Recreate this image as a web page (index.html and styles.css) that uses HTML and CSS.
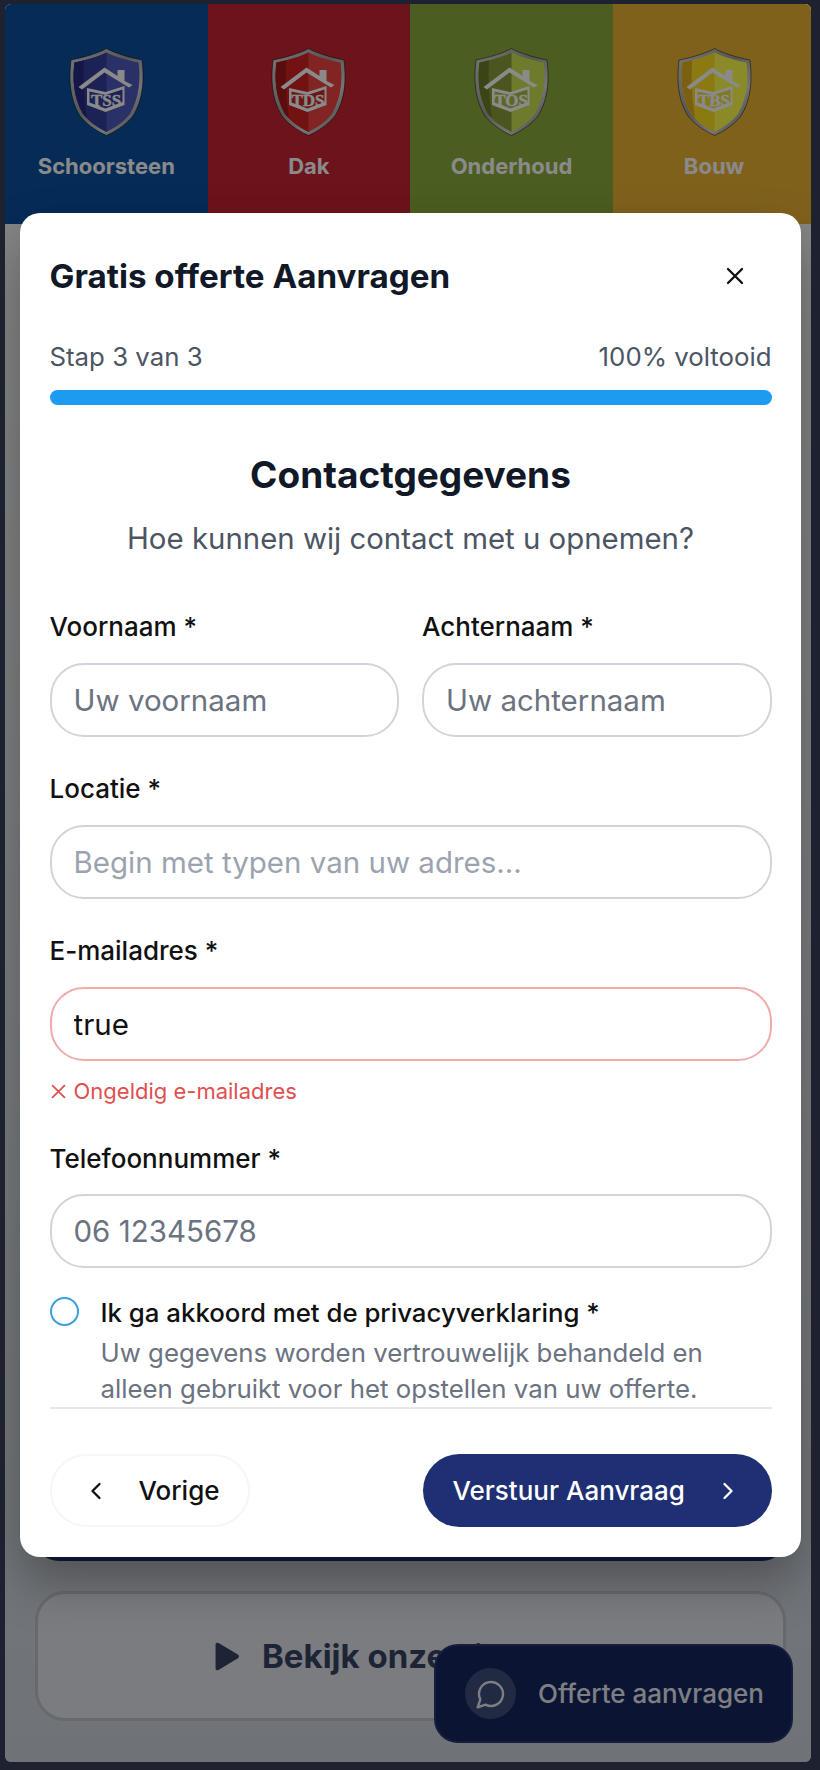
FILE: index.html
```html
<!DOCTYPE html>
<html lang="nl">
<head>
<meta charset="utf-8">
<title>Gratis offerte Aanvragen</title>
<link rel="stylesheet" href="styles.css">
</head>
<body>
<div class="frame">
  <svg class="defs" width="0" height="0" aria-hidden="true">
    <defs>
      <linearGradient id="metal" x1="0" y1="0" x2="1" y2="1">
        <stop offset="0" stop-color="#dcdcdc"/>
        <stop offset=".45" stop-color="#a0a0a0"/>
        <stop offset=".7" stop-color="#d8d8d8"/>
        <stop offset="1" stop-color="#666"/>
      </linearGradient>
      <path id="outer" d="M37.500 0.500C30 5 13 10 2 12C0 30 0 50 11 68C19 78 30 84 37.500 87.500C45 84 56 78 64 68C75 50 75 30 73 12C62 10 45 5 37.500 0.500Z"/>
      <path id="inner" d="M37.500 4.500C30 8.500 15.500 12.500 5.500 14.500C3.500 30 4 48 14 66C21.500 75.500 31 80.500 37.500 84C44 80.500 53.500 75.500 61 66C71 48 71.500 30 69.500 14.500C59.500 12.500 45 8.500 37.500 4.500Z"/>
      <path id="left" d="M37.500 4.500C30 8.500 15.500 12.500 5.500 14.500C3.500 30 4 48 14 66C21.500 75.500 31 80.500 37.500 84Z"/>
      <path id="strip" d="M15 12.300C11.500 13.200 8.500 14 5.500 14.500C3.500 30 4 48 14 66C15 67.300 16.200 68.600 18 70C15 50 14 30 15 12.300Z"/>
      <g id="house">
        <path d="M9.500 39L35.500 19.500L48.500 28V22H55.500V33L63.500 37L60 39.500L35.500 24.500L13 41.500Z" fill="#fff"/>
        <path d="M18 40L36.500 44L55.500 38V57L36.500 64L18 57Z" fill="#fff"/>
      </g>
    </defs>
  </svg>

  <header class="banner">
    <div class="tile tile-blue">
      <svg class="shield" viewBox="0 0 75 88">
        <use href="#outer" class="shield-rim"/>
        <use href="#inner" class="fill-blue"/>
        <use href="#left" class="fill-blue-dark"/>
        <use href="#strip" class="fill-blue-deep"/>
        <use href="#house"/>
        <path class="panel-blue" d="M20.500 43.500L36.500 47L53.500 41.500V54L36.500 60.500L20.500 54.500Z"/>
        <text class="crest" x="37" y="57.500">TSS</text>
      </svg>
      <span class="tile-label">Schoorsteen</span>
    </div>
    <div class="tile tile-red">
      <svg class="shield" viewBox="0 0 75 88">
        <use href="#outer" class="shield-rim"/>
        <use href="#inner" class="fill-red"/>
        <use href="#left" class="fill-red-dark"/>
        <use href="#strip" class="fill-red-deep"/>
        <use href="#house"/>
        <path class="panel-red" d="M20.500 43.500L36.500 47L53.500 41.500V54L36.500 60.500L20.500 54.500Z"/>
        <text class="crest" x="37" y="57.500">TDS</text>
      </svg>
      <span class="tile-label">Dak</span>
    </div>
    <div class="tile tile-green">
      <svg class="shield" viewBox="0 0 75 88">
        <use href="#outer" class="shield-rim"/>
        <use href="#inner" class="fill-green"/>
        <use href="#left" class="fill-green-dark"/>
        <use href="#strip" class="fill-green-deep"/>
        <use href="#house"/>
        <path class="panel-green" d="M20.500 43.500L36.500 47L53.500 41.500V54L36.500 60.500L20.500 54.500Z"/>
        <text class="crest" x="37" y="57.500">TOS</text>
      </svg>
      <span class="tile-label">Onderhoud</span>
    </div>
    <div class="tile tile-yellow">
      <svg class="shield" viewBox="0 0 75 88">
        <use href="#outer" class="shield-rim"/>
        <use href="#inner" class="fill-yellow"/>
        <use href="#left" class="fill-yellow-dark"/>
        <use href="#strip" class="fill-yellow-deep"/>
        <use href="#house"/>
        <path class="panel-yellow" d="M20.500 43.500L36.500 47L53.500 41.500V54L36.500 60.500L20.500 54.500Z"/>
        <text class="crest" x="37" y="57.500">TBS</text>
      </svg>
      <span class="tile-label">Bouw</span>
    </div>
  </header>

  <main class="content">
    <a class="cta-solid" href="#">Offerte aanvragen</a>
    <a class="cta-outline" href="#">
      <svg class="play" viewBox="2.500 0 23.500 28" preserveAspectRatio="none"><path d="M3 2.500C3 1 4.600 0.300 5.800 1L24 12C25.300 12.800 25.300 15 24 15.800L5.800 27C4.600 27.700 3 27 3 25.500Z"/></svg>
      <span>Bekijk onze video</span>
    </a>
  </main>

  <button class="fab" type="button">
    <span class="fab-icon">
      <svg viewBox="0 0 24 24"><path d="M7.900 20A9 9 0 1 0 4 16.100L2 22Z"/></svg>
    </span>
    <span>Offerte aanvragen</span>
  </button>

  <div class="overlay">
    <section class="modal">
      <div class="modal-head">
        <h2 class="modal-title">Gratis offerte Aanvragen</h2>
        <button class="close" type="button" aria-label="Sluiten">
          <svg viewBox="0 0 24 24"><path d="M18 6L6 18M6 6l12 12"/></svg>
        </button>
      </div>
      <div class="progress-text"><span>Stap 3 van 3</span><span>100% voltooid</span></div>
      <div class="progress-bar"></div>

      <h3 class="step-title">Contactgegevens</h3>
      <p class="step-sub">Hoe kunnen wij contact met u opnemen?</p>

      <form class="form">
        <div class="name-row">
          <label class="field">
            <span class="field-label">Voornaam *</span>
            <input class="input" type="text" placeholder="Uw voornaam">
          </label>
          <label class="field">
            <span class="field-label">Achternaam *</span>
            <input class="input" type="text" placeholder="Uw achternaam">
          </label>
        </div>
        <label class="field">
          <span class="field-label">Locatie *</span>
          <input class="input input-light" type="text" placeholder="Begin met typen van uw adres...">
        </label>
        <div class="field">
          <label class="field-label" for="mail">E-mailadres *</label>
          <input class="input input-error" id="mail" type="text" value="true">
          <p class="error">
            <svg viewBox="0 0 14 14"><path d="M1 1l12 12M13 1L1 13"/></svg>
            <span>Ongeldig e-mailadres</span>
          </p>
        </div>
        <label class="field">
          <span class="field-label">Telefoonnummer *</span>
          <input class="input" type="text" placeholder="06 12345678">
        </label>
        <div class="consent">
          <span class="radio"></span>
          <div class="consent-text">
            <p class="consent-title">Ik ga akkoord met de privacyverklaring *</p>
            <p class="consent-note">Uw gegevens worden vertrouwelijk behandeld en alleen gebruikt voor het opstellen van uw offerte.</p>
          </div>
        </div>
      </form>

      <div class="modal-foot">
        <button class="btn btn-back" type="button">
          <svg viewBox="0 0 24 24"><path d="M15 18l-6-6 6-6"/></svg>
          <span>Vorige</span>
        </button>
        <button class="btn btn-send" type="button">
          <span>Verstuur Aanvraag</span>
          <svg viewBox="0 0 24 24"><path d="M9 18l6-6-6-6"/></svg>
        </button>
      </div>
    </section>
  </div>
</div>
</body>
</html>
```

FILE: styles.css
```css
* { box-sizing: border-box; }
html, body { margin: 0; padding: 0; }
body {
  width: 820px;
  height: 1770px;
  padding: 4px 0 0 5px;
  background: #1d2130;
  font-family: Inter, "Liberation Sans", sans-serif;
  overflow: hidden;
}
p, h2, h3 { margin: 0; }
.defs { position: absolute; }

.frame {
  position: relative;
  width: 806px;
  height: 1758px;
  border-radius: 6px;
  overflow: hidden;
  background: linear-gradient(180deg, #f6f6f6 12%, #cdd5de 100%);
}

/* banner */
.banner { display: flex; height: 220px; }
.tile {
  flex: 0 0 202.600px;
  display: flex;
  flex-direction: column;
  align-items: center;
  padding-top: 44px;
}
.tile-blue { background: #0b51a1; }
.tile-red { background: #c82333; }
.tile-green { background: #8bac3b; }
.tile-yellow { background: #edb434; }
.shield { width: 75px; height: 88px; display: block; }
.shield-rim { fill: url(#metal); stroke: rgba(0, 0, 0, .6); stroke-width: .8; }
.fill-blue { fill: #4c5bbe; }
.fill-blue-dark { fill: #3640a0; }
.fill-blue-deep { fill: #252c85; }
.panel-blue { fill: #3640a0; }
.fill-red { fill: #f04444; }
.fill-red-dark { fill: #d42222; }
.fill-red-deep { fill: #a71818; }
.panel-red { fill: #c82a2a; }
.fill-green { fill: #cde452; }
.fill-green-dark { fill: #899d3b; }
.fill-green-deep { fill: #6c7e2c; }
.panel-green { fill: #a9bf48; }
.fill-yellow { fill: #ffff4a; }
.fill-yellow-dark { fill: #ffe221; }
.fill-yellow-deep { fill: #e2b21e; }
.panel-yellow { fill: #f0e038; }
.crest {
  font-family: "Liberation Serif", serif;
  font-weight: 700;
  font-size: 17px;
  text-anchor: middle;
  fill: #fff;
  stroke: #fff;
  stroke-width: .4;
}
.tile-label {
  margin-top: 16px;
  font-size: 22px;
  line-height: 28px;
  font-weight: 700;
  color: #fff;
}

/* page behind the dialog */
.content { padding: 1217px 25px 0 30px; }
.cta-solid {
  display: block;
  height: 120px;
  border-radius: 24px;
  background: #1c3076;
  color: #fff;
  text-decoration: none;
}
.cta-outline {
  margin-top: 30px;
  height: 130px;
  border: 3px solid #bdc4ce;
  border-radius: 30px;
  background: #e2e6eb;
  display: flex;
  align-items: center;
  justify-content: flex-start;
  gap: 22px;
  padding-left: 177px;
  color: #364364;
  font-size: 33px;
  font-weight: 700;
  text-decoration: none;
}
.play { width: 25px; height: 29px; fill: #364364; }

.fab {
  position: absolute;
  left: 429px;
  top: 1640px;
  width: 359px;
  height: 99px;
  border: 2px solid #2a3870;
  border-radius: 24px;
  background: #16265f;
  color: #e8eaf0;
  display: flex;
  align-items: center;
  gap: 22px;
  padding: 0 0 0 29px;
  font: 500 26px Inter, "Liberation Sans", sans-serif;
}
.fab-icon {
  width: 51px;
  height: 51px;
  border-radius: 50%;
  background: rgba(255, 255, 255, .18);
  display: flex;
  align-items: center;
  justify-content: center;
}
.fab-icon svg { width: 32px; height: 32px; fill: none; stroke: #e8eaf0; stroke-width: 1.800; stroke-linejoin: round; stroke-linecap: round; }

.overlay {
  position: absolute;
  inset: 0;
  background: rgba(0, 0, 0, .46);
}

/* dialog */
.modal {
  position: absolute;
  left: 15px;
  top: 209px;
  width: 781px;
  height: 1344px;
  padding: 43px 29.500px 30px;
  background: #fff;
  border-radius: 20px;
  box-shadow: 0 25px 50px rgba(0, 0, 0, .3);
  color: #111827;
}
.modal-head { display: flex; justify-content: space-between; align-items: center; height: 40px; }
.modal-title { font-size: 33.200px; line-height: 40px; font-weight: 700; color: #111827; }
.close {
  width: 44px;
  height: 44px;
  margin-right: 15px;
  padding: 0;
  border: 0;
  background: none;
  display: flex;
  align-items: center;
  justify-content: center;
}
.close svg { width: 28px; height: 28px; fill: none; stroke: #111; stroke-width: 2; stroke-linecap: round; }
.progress-text {
  margin-top: 46px;
  display: flex;
  justify-content: space-between;
  font-size: 25.800px;
  line-height: 30px;
  color: #4b5563;
}
.progress-bar {
  margin-top: 18px;
  height: 15px;
  border-radius: 8px;
  background: #1d9bf0;
}
.step-title {
  margin-top: 48px;
  text-align: center;
  font-size: 37px;
  line-height: 44px;
  font-weight: 700;
  color: #111827;
}
.step-sub {
  margin-top: 24px;
  text-align: center;
  font-size: 29.400px;
  line-height: 36px;
  color: #4b5563;
}

.form {
  margin-top: 55px;
  height: 795px;
  display: flex;
  flex-direction: column;
  gap: 37.500px;
  overflow: hidden;
}
.name-row { display: grid; grid-template-columns: 1fr 1fr; gap: 23px; }
.field { display: block; }
.field-label {
  display: block;
  margin-bottom: 20.500px;
  font-size: 26px;
  line-height: 30px;
  font-weight: 450;
  color: #111;
}
.input {
  display: block;
  width: 100%;
  height: 74px;
  padding: 0 22px;
  border: 2px solid #d1d5db;
  border-radius: 34px;
  background: #fff;
  outline: none;
  font: 400 29.500px Inter, "Liberation Sans", sans-serif;
  color: #111;
}
.input::placeholder { color: #6b7280; opacity: 1; }
.input-light::placeholder { color: #9ca3af; }
.input-error { border-color: #f1aaaa; }
.error {
  margin-top: 15.500px;
  display: flex;
  align-items: center;
  gap: 8px;
  font-size: 22px;
  line-height: 30px;
  color: #e04f4f;
}
.error svg { width: 15px; height: 15px; fill: none; stroke: #e04f4f; stroke-width: 1.600; margin-left: 1px; }
.consent { display: flex; gap: 22px; margin-top: -10.500px; }
.radio {
  flex: none;
  width: 29px;
  height: 29px;
  margin-top: 2px;
  border: 2px solid #3b9fe0;
  border-radius: 50%;
}
.consent-text { padding-right: 20px; }
.consent-title { font-size: 25.800px; line-height: 36px; font-weight: 450; color: #111; }
.consent-note { margin-top: 4px; font-size: 25.800px; line-height: 36px; color: #6b7280; }

.modal-foot {
  border-top: 2px solid #e5e7eb;
  padding-top: 45px;
  display: flex;
  justify-content: space-between;
}
.btn {
  height: 73px;
  border-radius: 37px;
  display: flex;
  align-items: center;
  font: 450 26px Inter, "Liberation Sans", sans-serif;
}
.btn svg { width: 28px; height: 28px; fill: none; stroke: currentColor; stroke-width: 2; stroke-linecap: round; stroke-linejoin: round; }
.btn-back {
  width: 200px;
  padding: 0 0 0 30px;
  gap: 29px;
  background: #fff;
  border: 2px solid #f5f6f7;
  color: #111;
}
.btn-send {
  width: 349px;
  padding: 0 0 0 30px;
  gap: 29px;
  background: #1f2f73;
  border: 0;
  color: #fff;
}
```
